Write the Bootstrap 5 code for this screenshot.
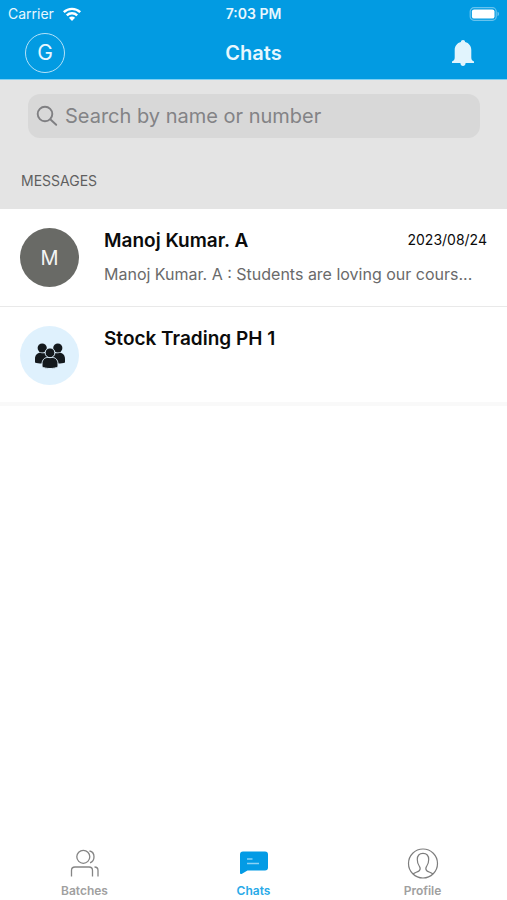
<!DOCTYPE html>
<html lang="en">
<head>
<meta charset="utf-8">
<meta name="viewport" content="width=device-width, initial-scale=1">
<title>Chats</title>
<link href="https://cdn.jsdelivr.net/npm/bootstrap@5.3.0/dist/css/bootstrap.min.css" rel="stylesheet">
<style>
  body { font-family: Inter, "Liberation Sans", sans-serif; color: #0b0b0b; background: #fff; }
  svg { display: block; }
  .app-header { background: #029be2; border-bottom: 1px solid #7fd0f3; color: #e8f7fe; }
  .status-bar { height: 27px; font-size: 14px; padding: 0 8px; }
  .title-bar { height: 52px; padding: 0 25px 1px; }
  .title-bar h1 { font-size: 20px; }
  .account-btn { width: 40px; height: 40px; border: 1px solid #b5e2f8; font-size: 21px; color: #e8f7fe; }
  .bell-btn { margin-right: 7px; }
  .search-area { background: #e4e4e4; padding: 14px 27px 0 28px; height: 129px; }
  .search-box { height: 44px; border-radius: 12px; background: #d8d8d8; padding: 0 8px; gap: 7px; color: #7f7f82; }
  .search-box input { font-size: 20px; color: #505054; outline: 0; }
  .search-box input::placeholder { color: #838386; opacity: 1; }
  .section-label { font-size: 14px; line-height: 20px; color: #5f5f5f; margin: 33px 0 0 -7px; }
  .chat-row { height: 98px; padding: 19px 20px; gap: 25px; border-bottom: 1px solid #e9e9e9; color: inherit; }
  .chat-row:last-child { border-bottom: 4px solid #f9f9f9; height: 99px; }
  .avatar { width: 59px; height: 59px; font-size: 20px; background: #696a66; color: #f4f4f4; }
  .avatar-group { background: #dff1fd; color: #14191d; }
  .chat-name { font-size: 19px; line-height: 26px; }
  .chat-date { font-size: 14px; line-height: 24px; }
  .chat-text { font-size: 16px; line-height: 24px; color: #6a6a6a; margin-top: 8px; }
  .tab-link { font-size: 12px; line-height: 16px; color: #a0a0a0; gap: 3px; padding-bottom: 1px; }
  .tab-link.active { color: #29aae8; }
</style>
<script src="https://cdn.jsdelivr.net/npm/bootstrap@5.3.0/dist/js/bootstrap.bundle.min.js"></script>
</head>
<body>
<div class="d-flex flex-column min-vh-100">
  <header class="app-header">
    <div class="status-bar row g-0 align-items-center">
      <div class="col d-flex align-items-center gap-2">
        <span>Carrier</span>
        <svg width="20" height="14" viewBox="0 0 20 14" fill="none" stroke="#fff" stroke-width="2.4" aria-label="Wi-Fi"><path d="M1.8 5.2a11.8 11.8 0 0 1 16.4 0"/><path d="M4.8 8.4a7.5 7.5 0 0 1 10.4 0"/><path d="M10 14 6.900 10.800a4.600 4.600 0 0 1 6.200 0z" fill="#fff" stroke="none"/></svg>
      </div>
      <div class="col-auto fw-semibold">7:03 PM</div>
      <div class="col d-flex justify-content-end">
        <svg width="30" height="14" viewBox="0 0 30 14" aria-label="Battery"><rect x="1.200" y=".7" width="26" height="12.600" rx="3.800" fill="none" stroke="#67c3ee" stroke-width="1.200"/><rect x="2.900" y="2.400" width="22.600" height="9.200" rx="2.200" fill="#fff"/><path d="M28.500 4.800c2 .6 2 3.800 0 4.400z" fill="#67c3ee"/></svg>
      </div>
    </div>
    <div class="title-bar row g-0 align-items-center">
      <div class="col"><button type="button" class="account-btn btn rounded-circle p-0 d-flex align-items-center justify-content-center" aria-label="Account G">G</button></div>
      <h1 class="col-auto fw-semibold m-0">Chats</h1>
      <div class="col d-flex justify-content-end">
        <button type="button" class="bell-btn btn p-0 border-0" aria-label="Notifications">
          <svg width="24" height="28" viewBox="0 0 24 28" fill="#e1f4fd"><path d="M12 1c1.300 0 2.100.8 2.100 2C18 4 20.300 7 20.300 11v7.500c0 2 .7 3.200 2.700 4V24H1v-1.500c2-.8 2.700-2 2.700-4V11C3.700 7 6 4 9.900 3c0-1.200.8-2 2.100-2zM9.400 24h5.200c0 1.900-1.200 2.900-2.600 2.900S9.400 25.900 9.400 24z"/></svg>
        </button>
      </div>
    </div>
  </header>
  <main class="flex-grow-1">
    <section class="search-area">
      <label class="search-box d-flex align-items-center">
        <svg class="flex-shrink-0" width="22" height="22" viewBox="0 0 22 22" fill="none" stroke="currentColor" stroke-width="1.900" stroke-linecap="round" aria-hidden="true"><circle cx="9" cy="9" r="7.300"/><path d="m14.500 14.500 5.700 5.300"/></svg>
        <input type="search" class="flex-grow-1 border-0 bg-transparent p-0" placeholder="Search by name or number" aria-label="Search by name or number">
      </label>
      <h2 class="section-label fw-normal">MESSAGES</h2>
    </section>
    <div>
      <a href="#manoj" class="chat-row d-flex text-decoration-none">
        <span class="avatar rounded-circle flex-shrink-0 d-flex align-items-center justify-content-center">M</span>
        <span class="flex-grow-1 overflow-hidden">
          <span class="d-flex justify-content-between align-items-start"><span class="chat-name fw-semibold">Manoj Kumar. A</span><span class="chat-date">2023/08/24</span></span>
          <span class="chat-text d-block text-truncate">Manoj Kumar. A : Students are loving our cours...</span>
        </span>
      </a>
      <a href="#stock" class="chat-row d-flex text-decoration-none">
        <span class="avatar avatar-group rounded-circle flex-shrink-0 d-flex align-items-center justify-content-center">
          <svg width="32" height="28" viewBox="0 0 32 28" fill="currentColor" aria-hidden="true"><circle cx="8.200" cy="6" r="4.600"/><circle cx="23.800" cy="6" r="4.600"/><path d="M1 20.500V17c0-3.700 2.200-6.200 5.500-6.200 1.500.7 2.700.7 4 .2L14 13v8c-4 .8-10 .8-13-.5zM31 20.500V17c0-3.700-2.200-6.200-5.500-6.200-1.500.7-2.700.7-4 .2L18 13v8c4 .8 10 .8 13-.5z"/><g stroke="#dff1fd" stroke-width="1"><path d="M8 25v-3c0-4 2.400-6.500 5.500-6.500h5c3.100 0 5.500 2.500 5.500 6.500v3c-4 2-12 2-16 0z"/><circle cx="16" cy="10.800" r="4.900"/></g></svg>
        </span>
        <span class="flex-grow-1 overflow-hidden"><span class="chat-name fw-semibold">Stock Trading PH 1</span></span>
      </a>
    </div>
  </main>
  <nav class="row g-0 text-center fw-semibold" aria-label="Main">
    <a href="#batches" class="tab-link col d-flex flex-column align-items-center text-decoration-none">
      <svg width="32" height="32" viewBox="0 0 32 32" fill="none" stroke="#858585" stroke-width="1.300" aria-hidden="true"><circle cx="14.300" cy="8.800" r="6.500"/><path d="M20.500 3c3 .6 4.500 3 4.500 5.800s-1.500 5.200-4 6"/><path d="M2.500 28.500v-6c0-2.500 1-3.500 3.500-3.500h14c2.500 0 3.500 1 3.500 3.500v6M25.500 19c2.500 0 3.500 1 3.500 3.500v6"/></svg>
      Batches
    </a>
    <a href="#chats" class="tab-link active col d-flex flex-column align-items-center text-decoration-none" aria-current="page">
      <svg width="32" height="32" viewBox="0 0 32 32" aria-hidden="true"><path d="M5 3.500h22a3 3 0 0 1 3 3v13a3 3 0 0 1-3 3H9.500L4 25.800c-1 .5-2 .2-2-1V6.500a3 3 0 0 1 3-3z" fill="#039be5"/><path d="M9 11h5.500M9 15.500h12" stroke="#8bd2f5" stroke-width="1.500"/></svg>
      Chats
    </a>
    <a href="#profile" class="tab-link col d-flex flex-column align-items-center text-decoration-none">
      <svg width="32" height="32" viewBox="0 0 32 32" fill="none" stroke="#7d7d7d" stroke-width="1.200" aria-hidden="true"><circle cx="16" cy="15.500" r="14.500"/><path d="M6 26c1.500-1.500 5-2 6.500-3.500 1-1.500.7-3.200-.3-4.500-1.200-1.600-1.900-4-1.900-6.500C10.300 7.500 12 5.300 16 5.300s5.700 2.200 5.700 6.200c0 2.500-.7 4.900-1.900 6.500-1 1.300-1.300 3-.3 4.500 1.500 1.500 5 2 6.500 3.500"/></svg>
      Profile
    </a>
  </nav>
</div>
</body>
</html>
